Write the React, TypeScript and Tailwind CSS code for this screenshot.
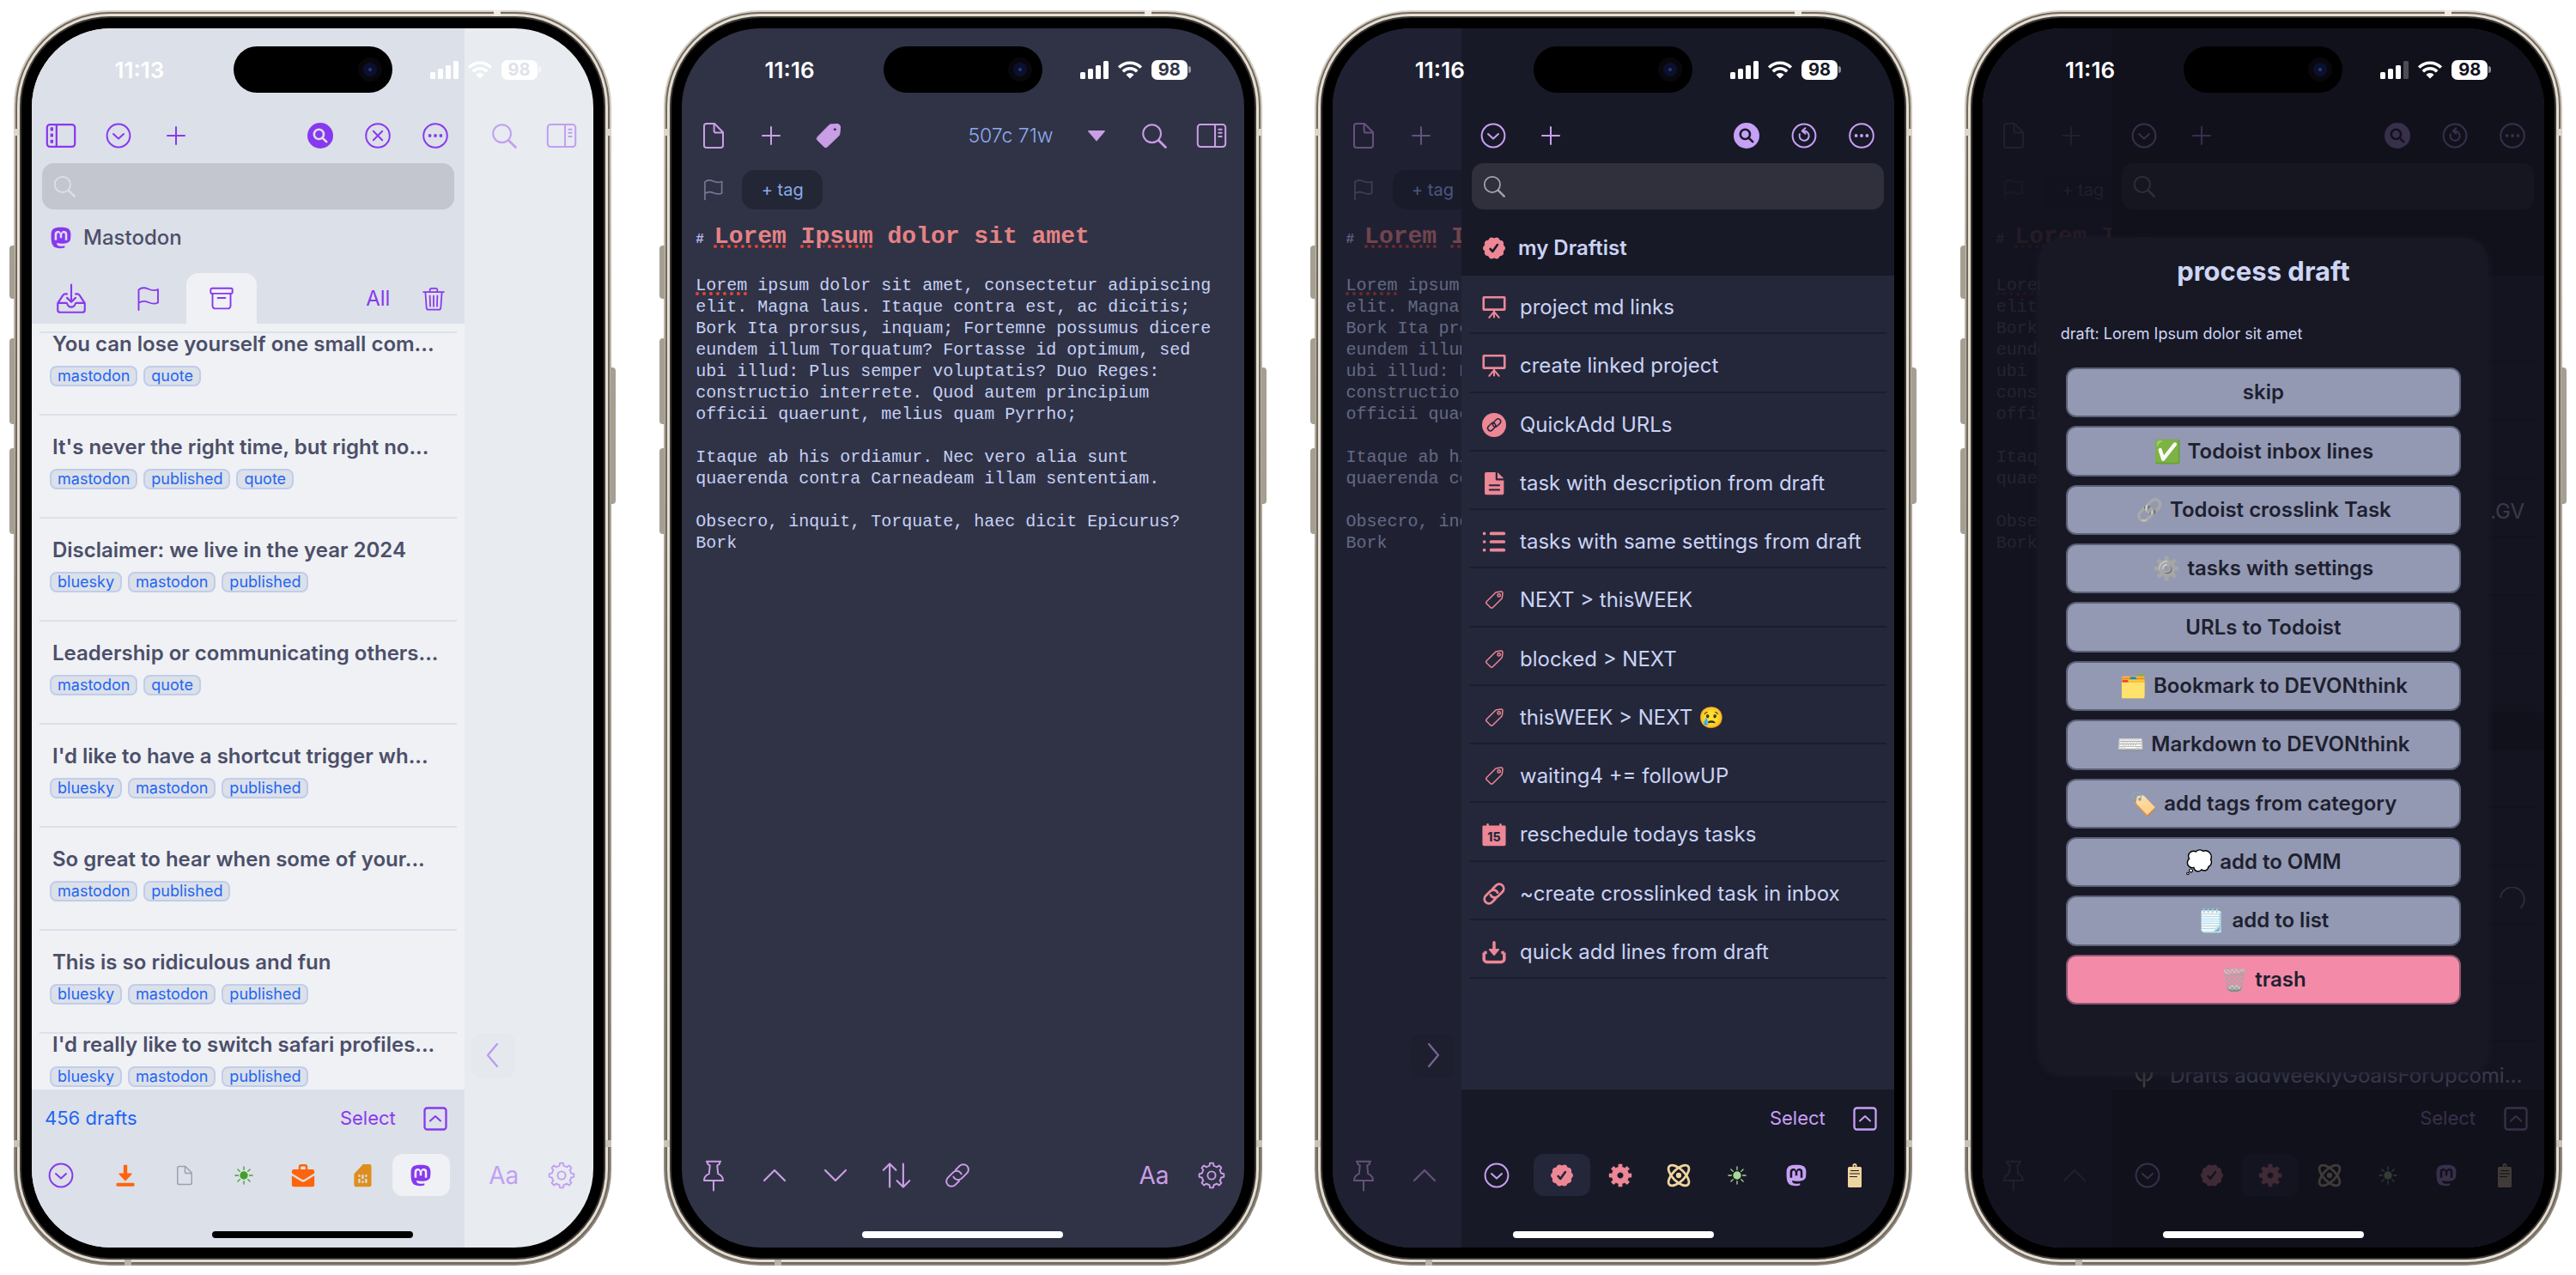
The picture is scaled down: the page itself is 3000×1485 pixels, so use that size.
import React from "react";
import { FaMastodon } from "react-icons/fa6";

type Kids = { children?: React.ReactNode };
type Cls = { className?: string };

/* ---------- icons ---------- */

function Svg({ children, className = "size-8", sw = 2 }: Kids & Cls & { sw?: number }) {
  return (
    <svg viewBox="0 0 32 32" className={className} fill="none" stroke="currentColor" strokeWidth={sw} strokeLinecap="round" strokeLinejoin="round" aria-hidden="true">
      {children}
    </svg>
  );
}

function gearPath(teeth: number, rOut: number, rIn: number, top: number, base: number) {
  const step = (Math.PI * 2) / teeth;
  const p = (r: number, a: number) => `${(16 + r * Math.sin(a)).toFixed(2)} ${(16 - r * Math.cos(a)).toFixed(2)}`;
  let d = "";
  for (let i = 0; i < teeth; i++) {
    const a = i * step;
    d += `${i ? "L" : "M"}${p(rIn, a - step * base)}L${p(rOut, a - step * top)}A${rOut} ${rOut} 0 0 1 ${p(rOut, a + step * top)}L${p(rIn, a + step * base)}A${rIn} ${rIn} 0 0 1 ${p(rIn, a + step * (1 - base))}`;
  }
  return d + "Z";
}

const SidebarLeft = () => (
  <Svg className="size-9">
    <rect x="1.6" y="4.5" width="28.8" height="23" rx="3" />
    <path d="M11.4 4.5v23" />
    <path d="M5 9.2h3M5 15.6h3M5 22h3" strokeWidth="3.6" strokeLinecap="butt" />
  </Svg>
);
const SidebarRight = () => (
  <Svg className="size-9" sw={1.8}>
    <rect x="1.6" y="4.5" width="28.8" height="23" rx="3" />
    <path d="M19.6 4.5v23M23.4 9.6h3M23.4 13.2h3M23.4 16.8h3" />
  </Svg>
);
const ChevronCircle = () => (
  <Svg>
    <circle cx="16" cy="16" r="13.4" />
    <path d="M10 14l6 5.6L22 14" />
  </Svg>
);
const Plus = () => (
  <Svg>
    <path d="M16 6v20M6 16h20" />
  </Svg>
);
const SearchFilled = ({ glass }: { glass: string }) => (
  <Svg>
    <circle cx="16" cy="16" r="15" fill="currentColor" stroke="none" />
    <g className={glass} strokeWidth="2.6">
      <circle cx="14.4" cy="14.4" r="5.6" />
      <path d="M18.8 18.8l4.4 4.4" />
    </g>
  </Svg>
);
const CloseCircle = () => (
  <Svg>
    <circle cx="16" cy="16" r="13.8" />
    <path d="M10.8 10.8l10.4 10.4M21.2 10.8L10.8 21.2" />
  </Svg>
);
const UndoCircle = () => (
  <Svg>
    <circle cx="16" cy="16" r="13.4" />
    <path d="M10.9 14.2a5.6 5.6 0 1 0 5.3-3.6M17.4 7.2l-3.6 3.4 3.8 3" />
  </Svg>
);
const DotsCircle = () => (
  <Svg>
    <circle cx="16" cy="16" r="13.8" />
    <path d="M9.6 16h.01M16 16h.01M22.4 16h.01" strokeWidth="3.8" />
  </Svg>
);
const Search = ({ className = "size-8" }: Cls) => (
  <Svg className={className}>
    <circle cx="13.6" cy="13.6" r="10.4" />
    <path d="M21.4 21.4l8 8" strokeWidth="2.8" />
  </Svg>
);
const Doc = ({ className = "size-8" }: Cls) => (
  <Svg className={className}>
    <path d="M7.5 2h9.6L27 12v15.2A2.8 2.8 0 0 1 24.2 30H7.8A2.8 2.8 0 0 1 5 27.2V4.8A2.8 2.8 0 0 1 7.8 2zM16.6 2.4v7.8A2.4 2.4 0 0 0 19 12.6h7.6" />
  </Svg>
);
const TagFilled = () => (
  <Svg>
    <path fillRule="evenodd" fill="currentColor" strokeWidth="1" d="M18.4 3l7.6-.6c1.9 0 3.6 1.7 3.6 3.6l-.7 7.8c-.1.9-.5 1.7-1.1 2.3L14.6 28.8c-1.2 1.2-2.8 1.2-4 0L3.2 21.4c-1.2-1.2-1.2-2.8 0-4L16.2 4.2c.6-.6 1.3-1.1 2.2-1.2zM23.4 6.7a1.9 1.9 0 1 0 .01 0z" />
  </Svg>
);
const TagOutline = () => (
  <Svg className="size-7" sw={1.7}>
    <path d="M19.5 5.300l6-.6c1.200-.1 2 .8 1.900 1.900l-.6 5.800c-.1.700-.4 1.300-.9 1.800L14.300 25.800c-.9.900-2.300.9-3.200 0l-4.900-4.900c-.9-.9-.9-2.300 0-3.200L17.700 6.200c.5-.5 1.100-.8 1.800-.9z" />
    <circle cx="22.500" cy="9.600" r="1.900" />
  </Svg>
);
const Flag = ({ className = "size-8" }: Cls) => (
  <Svg className={className} sw={1.9}>
    <path d="M4.500 29V5.500C8 2.500 12 3 15.500 4.500s7.500 2.500 11.500.5v15.500c-4 2-8 1-11.500-.5s-7.500-1.500-11 .8" />
  </Svg>
);
const Tray = () => (
  <Svg className="size-9" sw={1.9}>
    <path d="M16 1.500v17.500M11.600 15l4.400 4.400L20.400 15" />
    <path d="M11.500 11H9.800c-1.200 0-1.800.4-2.400 1.400L2 20.500v7a2.500 2.500 0 0 0 2.500 2.500h23a2.500 2.500 0 0 0 2.500-2.500v-7l-5.400-8.100c-.6-1-1.200-1.400-2.400-1.400h-1.700M2.500 20.300h8.300c.8 0 1 .5 1.200 1.300.5 1.800 2 3 4 3s3.500-1.200 4-3c.2-.8.4-1.300 1.200-1.300h8.300" />
  </Svg>
);
const Archive = () => (
  <Svg className="size-7" sw={2.2}>
    <rect x="1.500" y="2" width="29" height="7" rx="2" />
    <path d="M4 9.200v16.300A3.500 3.500 0 0 0 7.500 29h17a3.500 3.500 0 0 0 3.500-3.500V9.200M11 14.800h10" />
  </Svg>
);
const Trash = () => (
  <Svg className="size-7">
    <path d="M2.500 7h27M11 6.800V4.500A2.500 2.500 0 0 1 13.500 2h5A2.500 2.500 0 0 1 21 4.500v2.300M5 7.200l1.500 20.900A2.500 2.500 0 0 0 9 30.400h14a2.500 2.500 0 0 0 2.500-2.300L27 7.200M11 12l.5 14M16 12v14M21 12l-.5 14" />
  </Svg>
);
const SquareUp = () => (
  <Svg>
    <rect x="3.500" y="3.500" width="25" height="25" rx="3" strokeWidth="2.300" />
    <path d="M10 18.500l6-5.500 6 5.500" />
  </Svg>
);
const Download = () => (
  <Svg className="size-7">
    <path fill="currentColor" stroke="none" d="M14.300 2h3.400a.8.8 0 0 1 .8.8V13h5.300c.8 0 1.200 1 .6 1.600l-7.600 8.200a1.100 1.100 0 0 1-1.600 0l-7.600-8.200c-.6-.6-.2-1.600.6-1.600h5.300V2.800a.8.8 0 0 1 .8-.8zM5.500 26h21a1.500 1.500 0 0 1 1.500 1.500v1.500a1.500 1.500 0 0 1-1.500 1.500h-21A1.500 1.500 0 0 1 4 29v-1.500A1.500 1.500 0 0 1 5.500 26z" />
  </Svg>
);
const Sun = () => (
  <Svg className="size-7" sw={1.5}>
    <circle cx="16" cy="16" r="4.600" fill="currentColor" />
    <path d="M16 4.500v4M16 23.500v4M4.500 16h4M23.500 16h4M7.900 7.900l2.800 2.800M21.300 21.300l2.800 2.800M24.100 7.900l-2.800 2.800M10.700 21.300l-2.800 2.800" />
  </Svg>
);
const Briefcase = () => (
  <Svg className="size-7">
    <path fill="currentColor" stroke="none" fillRule="evenodd" d="M10 8V4.500A3.500 3.500 0 0 1 13.500 1h5A3.500 3.500 0 0 1 22 4.500V8h6.500A2.500 2.500 0 0 1 31 10.500V13l-13.500 8.400a3 3 0 0 1-3 0L1 13v-2.500A2.500 2.500 0 0 1 3.500 8zM12.800 8h6.400V4.900a1 1 0 0 0-1-1h-4.400a1 1 0 0 0-1 1zM1 16.200l12.600 7.800a4.600 4.600 0 0 0 4.800 0L31 16.200V28.500a2.500 2.500 0 0 1-2.500 2.500h-25A2.500 2.500 0 0 1 1 28.500z" />
  </Svg>
);
const SimCard = ({ dots }: { dots: string }) => (
  <Svg className="size-7">
    <path fill="currentColor" stroke="none" d="M17 1h8.500A2.500 2.500 0 0 1 28 3.500v25a2.500 2.500 0 0 1-2.500 2.500h-18A2.500 2.500 0 0 1 5 28.500V14z" />
    <path className={dots} strokeWidth="2.600" strokeLinecap="butt" d="M12 15v3M12 20.500v5.500M16.500 15v5.500M16.500 23v3M21 15v3M21 20.500v5.500" />
  </Svg>
);
const GearOutline = () => (
  <Svg sw={1.9}>
    <path d={gearPath(8, 14.4, 11.4, 0.17, 0.28)} />
    <circle cx="16" cy="16" r="4.600" />
  </Svg>
);
const GearFilled = () => (
  <Svg className="size-7">
    <path fillRule="evenodd" fill="currentColor" strokeWidth="1.500" d={gearPath(8, 14.4, 10.8, 0.18, 0.22) + "M16 11.200a4.800 4.800 0 1 0 .01 0Z"} />
  </Svg>
);
const Badge = ({ tick }: { tick: string }) => (
  <Svg className="size-7">
    <g fill="currentColor" stroke="none">
      <circle cx="16" cy="16" r="13.400" />
      {[0, 36, 72, 108, 144, 180, 216, 252, 288, 324].map((a) => (
        <circle key={a} cx="16" cy="4.600" r="3.400" transform={`rotate(${a + 18} 16 16)`} />
      ))}
    </g>
    <path className={tick} strokeWidth="3" d="M11 17l3 3.500 6.500-9" />
  </Svg>
);
const Easel = () => (
  <Svg className="size-7" sw={3}>
    <rect x="2" y="2.500" width="28" height="16.500" rx="0.500" />
    <path d="M16 20v9M15 23l-5.500 6.500M17 23l5.500 6.500" strokeWidth="2.400" />
  </Svg>
);
const LinkCircle = () => (
  <Svg className="size-7">
    <circle cx="16" cy="16" r="16" fill="currentColor" stroke="none" />
    <g className="stroke-[#24273a]" strokeWidth="1.700">
      <rect x="13" y="5.500" width="7" height="12" rx="3.500" transform="rotate(45 16 16)" />
      <rect x="12" y="14" width="7" height="12" rx="3.500" transform="rotate(45 16 16)" />
    </g>
  </Svg>
);
const DocFilled = () => (
  <Svg className="size-7">
    <path fill="currentColor" stroke="none" d="M5.500 1H18v9.500A1.500 1.500 0 0 0 19.500 12H29v17a2 2 0 0 1-2 2H5.500a2 2 0 0 1-2-2V3a2 2 0 0 1 2-2zM20.500 1L29 9.500h-8.500z" />
    <path className="stroke-[#24273a]" d="M10 18.500h13M10 24.500h13" strokeWidth="2.200" />
  </Svg>
);
const ListIcon = () => (
  <Svg className="size-7" sw={4.2}>
    <path d="M12 5h17M12 16h17M12 27h17M3 5h.01M3 16h.01M3 27h.01" />
  </Svg>
);
const Calendar = () => (
  <svg viewBox="0 0 32 32" className="size-7" fill="currentColor" aria-hidden="true">
    <path fillRule="evenodd" d="M2 4h4V2.500a1.500 1.500 0 0 1 3 0V4h14V2.500a1.500 1.500 0 0 1 3 0V4h4a1.500 1.500 0 0 1 1.500 1.500V29a2 2 0 0 1-2 2h-27a2 2 0 0 1-2-2V5.500A1.500 1.500 0 0 1 2 4z" />
    <text x="16" y="25" textAnchor="middle" className="fill-[#24273a] font-['Inter'] text-[16px] font-extrabold">15</text>
  </svg>
);
const Link = ({ sw = 2, className = "size-8" }: Cls & { sw?: number }) => (
  <Svg className={className} sw={sw}>
    <path d="M14 9.500l4.600-4.600a6 6 0 0 1 8.500 8.500l-6 6a6 6 0 0 1-8.500 0 6 6 0 0 1-1.200-1.800" />
    <path d="M18 22.500l-4.600 4.600a6 6 0 0 1-8.500-8.500l6-6a6 6 0 0 1 8.500 0 6 6 0 0 1 1.200 1.800" />
  </Svg>
);
const DownTray = () => (
  <Svg className="size-7" sw={4}>
    <path d="M2.500 16.500v8.500a4 4 0 0 0 4 4h19a4 4 0 0 0 4-4v-8.500M2.500 16.500h4M25.500 16.500h4" strokeLinecap="butt" />
    <path d="M16 3v12" />
    <path d="M10 12.500h12l-6 7z" fill="currentColor" strokeWidth="2" />
  </Svg>
);
const Atom = () => (
  <Svg className="size-7" sw={3.2}>
    <ellipse cx="16" cy="16" rx="17.500" ry="8" transform="rotate(45 16 16)" />
    <ellipse cx="16" cy="16" rx="17.500" ry="8" transform="rotate(-45 16 16)" />
    <circle cx="16" cy="16" r="2" fill="currentColor" />
  </Svg>
);
const Clipboard = () => (
  <Svg className="size-8">
    <path fill="currentColor" stroke="none" d="M9.500 6h4v-1.500a2.500 2.500 0 0 1 5 0V6h4A1.500 1.500 0 0 1 24 7.500v21a1.500 1.500 0 0 1-1.500 1.500h-13A1.500 1.500 0 0 1 8 28.500v-21A1.500 1.500 0 0 1 9.500 6z" />
    <path className="stroke-[#181926]" strokeWidth="1.200" d="M11.500 10.500h9M10.500 14h11M10.500 17.500h8" />
    <circle className="fill-[#181926]" cx="16" cy="5" r="0.900" stroke="none" />
  </Svg>
);
const Pin = () => (
  <Svg className="size-10" sw={1.6}>
    <path d="M9.500 3h13M10 3l.6 2.500 2 1.200-.8 7.800c-3 1.200-4.600 3.600-4.600 6.200h17.600c0-2.600-1.600-5-4.600-6.200l-.8-7.800 2-1.200L22 3M16 20.700V30" />
  </Svg>
);
const Chevron = ({ d }: { d: string }) => (
  <Svg>
    <path d={d} strokeWidth="2.200" />
  </Svg>
);
const UP = "M4 22l12-12 12 12";
const DOWN = "M4 10l12 12 12-12";
const LEFT = "M22 3L11 16l11 13";
const RIGHT = "M10 3l11 13-11 13";
const UpDown = () => (
  <Svg className="size-9" sw={1.9}>
    <path d="M9 28V4M2.500 10.500L9 4l6.500 6.500M23 4v24M16.500 21.500L23 28l6.500-6.500" />
  </Svg>
);
const Mastodon = () => <FaMastodon className="size-7" aria-hidden="true" />;

/* ---------- shared parts ---------- */

function IconButton({ label, children, className = "" }: Kids & Cls & { label: string }) {
  return (
    <button type="button" aria-label={label} className={`flex h-14 w-[67px] shrink-0 items-center justify-center ${className}`}>
      {children}
    </button>
  );
}

function StatusBar({ time, digits, weak }: { time: string; digits: string; weak?: boolean }) {
  return (
    <div className="absolute inset-x-0 top-[21px] z-30 grid h-[54px] grid-cols-[1fr_185px_1fr] items-center text-white">
      <span className="pl-4 text-center text-[26px] font-semibold">{time}</span>
      <div className="relative flex h-[54px] items-center justify-end rounded-full bg-black pr-3">
        <span className="flex size-7 items-center justify-center rounded-full bg-[#08080c]">
          <span className="flex size-4 items-center justify-center rounded-full bg-[#0c1030]">
            <span className="size-1 rounded-full bg-[#2f3c74]" />
          </span>
        </span>
      </div>
      <div className="flex items-center gap-[11px] pl-[44px]">
        <svg viewBox="0 0 33 21" className="h-[21px] w-[33px]" fill="currentColor" role="img" aria-label="Signal">
          <rect x="0" y="13" width="6" height="8" rx="1.500" />
          <rect x="9" y="9" width="6" height="12" rx="1.500" />
          <rect x="18" y="5" width="6" height="16" rx="1.500" />
          <rect x="27" y="0" width="6" height="21" rx="1.500" opacity={weak ? 0.25 : 1} />
        </svg>
        <svg viewBox="0 0 28 21" className="h-[21px] w-[28px]" fill="none" stroke="currentColor" strokeWidth="3.600" role="img" aria-label="Wi-Fi">
          <path d="M1.200 7.600a18 18 0 0 1 25.600 0M5.800 12.200a11.600 11.600 0 0 1 16.400 0" />
          <path d="M14 20.500l-4.600-4.600a6.500 6.500 0 0 1 9.200 0z" fill="currentColor" stroke="none" />
        </svg>
        <span className="flex items-center gap-px">
          <span className={`flex h-[23px] w-[42px] items-center justify-center rounded-[7px] bg-white text-[20px] font-bold ${digits}`}>98</span>
          <span className="h-2 w-[3px] rounded-r-full bg-white/50" />
        </span>
      </div>
    </div>
  );
}

function Phone({ children, bar, bg }: Kids & { bar: string; bg: string }) {
  return (
    <article className="relative rounded-[112px] bg-linear-to-b from-[#d8d0c4] via-[#a39b8e] to-[#8d867b] p-[2px]">
      <i className="absolute top-[274px] -left-[5px] h-[62px] w-[6px] rounded-l-sm bg-[#a59f92]" />
      <i className="absolute top-[382px] -left-[5px] h-[100px] w-[6px] rounded-l-sm bg-[#a59f92]" />
      <i className="absolute top-[510px] -left-[5px] h-[100px] w-[6px] rounded-l-sm bg-[#a59f92]" />
      <i className="absolute top-[416px] -right-[5px] h-[159px] w-[6px] rounded-r-sm bg-[#a59f92]" />
      <div className="relative rounded-[110px] bg-[#6e695f] p-[2px]">
        <div className="rounded-[108px] bg-[#e6ded2] p-[3px]">
          <div className="rounded-[105px] bg-[#3a3835] p-[2px]">
            <div className="rounded-[103px] bg-black p-3">
              <div className={`relative aspect-[654/1419] overflow-hidden rounded-[92px] ${bg}`}>
                {children}
                <div className={`absolute bottom-[11px] left-1/2 z-30 h-2 w-[234px] -translate-x-1/2 rounded-full ${bar}`} />
              </div>
            </div>
          </div>
        </div>
      </div>
      <i className="absolute top-0 right-[129px] h-[7px] w-2 bg-[#efeae2]" />
      <i className="absolute bottom-0 left-[129px] h-[7px] w-2 bg-[#b9b2a7]" />
      <i className="absolute top-[138px] left-0 h-2 w-[7px] bg-[#dcd6cb]" />
      <i className="absolute top-[138px] right-0 h-2 w-[7px] bg-[#dcd6cb]" />
      <i className="absolute bottom-[138px] left-0 h-2 w-[7px] bg-[#c9c3b7]" />
      <i className="absolute right-0 bottom-[138px] h-2 w-[7px] bg-[#c9c3b7]" />
    </article>
  );
}

function SearchField({ id, className, icon }: { id: string; className: string; icon: string }) {
  return (
    <label htmlFor={id} className={`mx-3 mt-1 flex h-[54px] items-center rounded-[14px] pl-3 ${className}`}>
      <span className={icon}>
        <Search className="size-7" />
      </span>
      <input id={id} type="search" aria-label="Search" className="ml-2 min-w-0 flex-1 bg-transparent text-[26px] outline-none" />
    </label>
  );
}

function SelectRow({ count }: { count?: string }) {
  return (
    <div className="flex h-[68px] items-center">
      <span className="flex-1 pl-[15px] text-[22px] text-[#1e66f5]">{count}</span>
      <button type="button" className="mr-[13px] text-[22px]">Select</button>
      <IconButton label="Expand">
        <SquareUp />
      </IconButton>
    </div>
  );
}

type Item = { label: string; color: string; icon: React.ReactNode };

function Workspaces({ items, active, activeBg, pad }: { items: Item[]; active: number; activeBg: string; pad: string }) {
  return (
    <nav className={`flex h-16 items-center ${pad}`}>
      <IconButton label="Workspaces">
        <ChevronCircle />
      </IconButton>
      <div className="ml-2 grid flex-1 grid-cols-6">
        {items.map((it, i) => (
          <button key={it.label} type="button" aria-label={it.label} className={`mx-px flex h-[49px] items-center justify-center rounded-xl ${it.color} ${i === active ? activeBg : ""}`}>
            {it.icon}
          </button>
        ))}
      </div>
    </nav>
  );
}

/* ---------- draft list (light) ---------- */

const drafts: [string, string[]][] = [
  ["You can lose yourself one small com...", ["mastodon", "quote"]],
  ["It's never the right time, but right no...", ["mastodon", "published", "quote"]],
  ["Disclaimer: we live in the year 2024", ["bluesky", "mastodon", "published"]],
  ["Leadership or communicating others...", ["mastodon", "quote"]],
  ["I'd like to have a shortcut trigger wh...", ["bluesky", "mastodon", "published"]],
  ["So great to hear when some of your...", ["mastodon", "published"]],
  ["This is so ridiculous and fun", ["bluesky", "mastodon", "published"]],
  ["I'd really like to switch safari profiles...", ["bluesky", "mastodon", "published"]],
];

const lightItems: Item[] = [
  { label: "Inbox", color: "text-[#fe640b]", icon: <Download /> },
  { label: "Drafts", color: "text-[#9ca0b0]", icon: <Doc className="size-6" /> },
  { label: "Today", color: "text-[#40a02b]", icon: <Sun /> },
  { label: "Work", color: "text-[#fe640b]", icon: <Briefcase /> },
  { label: "Cards", color: "text-[#df8e1d]", icon: <SimCard dots="stroke-[#dce0e8]" /> },
  { label: "Mastodon", color: "text-[#8839ef]", icon: <Mastodon /> },
];

function LightPhone() {
  return (
    <Phone bar="bg-black" bg="bg-[#e8ebf0]">
      <StatusBar time="11:13" digits="text-[#dfe2ea]" />
      <div className="flex h-full flex-col items-end justify-between pt-[97px] text-[#c0a0f2]">
        <div className="flex pr-1">
          <IconButton label="Find"><Search /></IconButton>
          <IconButton label="Show actions"><SidebarRight /></IconButton>
        </div>
        <div className="flex h-[112px] items-start pr-1">
          <button type="button" className="h-14 w-[67px] text-[28px]">Aa</button>
          <IconButton label="Settings"><GearOutline /></IconButton>
        </div>
      </div>
      <button type="button" aria-label="Close list" className="absolute right-[91px] bottom-[198px] flex h-[51px] w-[51px] items-center justify-center rounded-xl bg-[#e5e8ed] pr-1 text-[#bb98ef]">
        <Chevron d={LEFT} />
      </button>
      <section className="absolute inset-y-0 left-0 flex w-[77%] flex-col bg-[#dce0e8] pt-[97px] text-[#8839ef]">
        <div className="flex items-center">
          <IconButton label="Hide list"><SidebarLeft /></IconButton>
          <IconButton label="More"><ChevronCircle /></IconButton>
          <IconButton label="New draft"><Plus /></IconButton>
          <span className="flex-1" />
          <IconButton label="Search drafts"><SearchFilled glass="stroke-[#dce0e8]" /></IconButton>
          <IconButton label="Close"><CloseCircle /></IconButton>
          <IconButton label="Options"><DotsCircle /></IconButton>
        </div>
        <SearchField id="q-light" className="bg-[#c3c6cf]" icon="text-[#dde0e8]" />
        <h2 className="flex h-[74px] items-center gap-3 pb-2 pl-5 text-2xl font-medium text-[#4c4f69]">
          <FaMastodon className="size-7 text-[#8839ef]" aria-hidden="true" />
          Mastodon
        </h2>
        <div className="flex h-[59px] items-stretch">
          <button type="button" aria-label="Inbox" className="flex w-[92px] items-center justify-center"><Tray /></button>
          <button type="button" aria-label="Flagged" className="flex w-[88px] items-center justify-center"><Flag /></button>
          <button type="button" aria-label="Archive" className="flex w-[82px] items-center justify-center rounded-t-[14px] bg-[#eff1f5]"><Archive /></button>
          <span className="flex-1" />
          <button type="button" className="w-[67px] text-2xl">All</button>
          <button type="button" aria-label="Trash" className="flex w-[67px] items-center justify-center pr-1"><Trash /></button>
        </div>
        <ul className="min-h-0 flex-1 overflow-hidden bg-[#eff1f5] pt-[9px]">
          {drafts.map(([title, tags], i) => (
            <li key={title} className={`mx-[9px] border-t-2 border-[#dce0e8] pb-8 ${i === 0 || i === 7 ? "" : "pt-6"}`}>
              <h3 className="pl-[15px] text-2xl leading-[26px] font-semibold whitespace-nowrap text-[#4c4f69]">{title}</h3>
              <div className="mt-3 flex gap-[7px] pl-3">
                {tags.map((t) => (
                  <span key={t} className="h-6 rounded-lg border-2 border-[#c0cdea] bg-[#dce0e8] px-[7px] text-lg leading-[19px] text-[#1e66f5]">{t}</span>
                ))}
              </div>
            </li>
          ))}
        </ul>
        <footer className="h-[184px]">
          <SelectRow count="456 drafts" />
          <Workspaces items={lightItems} active={5} activeBg="bg-[#eff1f5]" pad="pr-4" />
        </footer>
      </section>
    </Phone>
  );
}

/* ---------- editor (dark) ---------- */

const miss = "underline decoration-[#e64533] decoration-dotted decoration-4";

function Editor() {
  return (
    <section className="flex h-full flex-col bg-[#303346] pt-[97px] text-[#ca9ee6]">
      <div className="flex items-center pr-1 pl-[3px]">
        <IconButton label="Draft"><Doc /></IconButton>
        <IconButton label="New draft"><Plus /></IconButton>
        <IconButton label="Tags"><TagFilled /></IconButton>
        <span className="mr-[17px] flex-1 text-right text-[23px] font-light text-[#8caaee]">507c 71w</span>
        <IconButton label="Counts">
          <Svg className="size-7"><path d="M5.500 10h21L16 22.500z" fill="currentColor" strokeWidth="1.500" /></Svg>
        </IconButton>
        <IconButton label="Find"><Search /></IconButton>
        <IconButton label="Show actions"><SidebarRight /></IconButton>
      </div>
      <div className="mt-[7px] flex items-center pl-[3px]">
        <IconButton label="Flag" className="text-[#737994]"><Flag className="size-7" /></IconButton>
        <button type="button" className="h-[46px] w-[94px] rounded-[15px] bg-[#232634] text-xl text-[#8caaee]">+ tag</button>
      </div>
      <div className="flex-1 px-4 pt-[9px] font-['Liberation_Mono'] text-xl leading-[25px] whitespace-nowrap text-[#c6d0f5]">
        <h2 className="text-[28px] leading-9 font-bold text-[#e78284]">
          <span className="mr-3 text-base text-[#babbf1]">#</span>
          <span className={miss}>Lorem</span> <span className={miss}>Ipsum</span> dolor sit amet
        </h2>
        <p className="mt-[26px]"><span className={miss}>Lorem</span> ipsum dolor sit amet, consectetur adipiscing<br />elit. Magna laus. Itaque contra est, ac dicitis;<br />Bork Ita prorsus, inquam; Fortemne possumus dicere<br />eundem illum Torquatum? Fortasse id optimum, sed<br />ubi illud: Plus semper voluptatis? Duo Reges:<br />constructio interrete. Quod autem principium<br />officii quaerunt, melius quam Pyrrho;</p>
        <p className="mt-[25px]">Itaque ab his ordiamur. Nec vero alia sunt<br />quaerenda contra Carneadeam illam sententiam.</p>
        <p className="mt-[25px]">Obsecro, inquit, Torquate, haec dicit Epicurus?<br />Bork</p>
      </div>
      <footer className="flex h-[112px] items-start pr-1 pl-[3px]">
        <div className="flex gap-1">
          <IconButton label="Pin"><Pin /></IconButton>
          <IconButton label="Previous"><Chevron d={UP} /></IconButton>
          <IconButton label="Next"><Chevron d={DOWN} /></IconButton>
          <IconButton label="Arrange"><UpDown /></IconButton>
          <IconButton label="Link"><Link /></IconButton>
        </div>
        <span className="flex-1" />
        <button type="button" className="h-14 w-[67px] text-[28px]">Aa</button>
        <IconButton label="Settings"><GearOutline /></IconButton>
      </footer>
    </section>
  );
}

function EditorPeek() {
  return (
    <div className="absolute inset-y-0 left-0 w-[23%] overflow-hidden">
      <div className="h-full w-[435%]">
        <Editor />
      </div>
      <div className="absolute inset-0 bg-[#131323]/55" />
    </div>
  );
}

/* ---------- action drawer (dark) ---------- */

const actions: [React.ReactNode, string][] = [
  [<Easel />, "project md links"],
  [<Easel />, "create linked project"],
  [<LinkCircle />, "QuickAdd URLs"],
  [<DocFilled />, "task with description from draft"],
  [<ListIcon />, "tasks with same settings from draft"],
  [<TagOutline />, "NEXT > thisWEEK"],
  [<TagOutline />, "blocked > NEXT"],
  [<TagOutline />, "thisWEEK > NEXT 😢"],
  [<TagOutline />, "waiting4 += followUP"],
  [<Calendar />, "reschedule todays tasks"],
  [<Link className="size-7" sw={3.2} />, "~create crosslinked task in inbox"],
  [<DownTray />, "quick add lines from draft"],
];

const darkItems: Item[] = [
  { label: "Draftist", color: "text-[#ed8796]", icon: <Badge tick="stroke-[#24273a]" /> },
  { label: "Processing", color: "text-[#ed8796]", icon: <GearFilled /> },
  { label: "Science", color: "text-[#eed49f]", icon: <Atom /> },
  { label: "Today", color: "text-[#a6da95]", icon: <Sun /> },
  { label: "Mastodon", color: "text-[#c6a0f6]", icon: <Mastodon /> },
  { label: "Clipboard", color: "text-[#eed49f]", icon: <Clipboard /> },
];

function Drawer({ children, id, active, title }: Kids & { id: string; active: number; title?: string }) {
  return (
    <section className="absolute inset-y-0 right-0 flex w-[77%] flex-col bg-[#181926] pt-[97px] text-[#c6a0f6]">
      <div className="flex items-center px-1">
        <IconButton label="More"><ChevronCircle /></IconButton>
        <IconButton label="New action"><Plus /></IconButton>
        <span className="flex-1" />
        <IconButton label="Search actions"><SearchFilled glass="stroke-[#181926]" /></IconButton>
        <IconButton label="History"><UndoCircle /></IconButton>
        <IconButton label="Options"><DotsCircle /></IconButton>
      </div>
      <SearchField id={id} className="bg-[#302f3c]" icon="text-[#a0a2b0]" />
      <h2 className="flex h-[77px] items-center gap-[14px] pt-3 pl-6 text-2xl font-semibold text-[#cad3f5]">
        <span className="text-[#ed8796]"><Badge tick="stroke-[#181926]" /></span>
        {title}
      </h2>
      <div className="min-h-0 flex-1 overflow-hidden bg-[#24273a]">{children}</div>
      <footer className="h-[184px]">
        <SelectRow />
        <Workspaces items={darkItems} active={active} activeBg="bg-[#24273a]" pad="pr-3 pl-2" />
      </footer>
    </section>
  );
}

function ActionsPhone() {
  return (
    <Phone bar="bg-white" bg="bg-[#202233]">
      <StatusBar time="11:16" digits="text-[#181926]" />
      <EditorPeek />
      <button type="button" aria-label="Close actions" className="absolute bottom-[198px] left-[91px] flex h-[51px] w-[51px] items-center justify-center rounded-xl bg-[#1e1f2e] pl-1 text-[#7a6496]">
        <Chevron d={RIGHT} />
      </button>
      <Drawer id="q-actions" active={0} title="my Draftist">
        <ul className="grid h-[819px] grid-rows-12">
          {actions.map(([icon, label]) => (
            <li key={label} className="mx-[9px] border-b-2 border-[#1b1d2b]">
              <button type="button" className="flex h-full w-full items-center gap-4 pt-2 pl-[15px] text-left text-2xl whitespace-nowrap text-[#cad3f5]">
                <span className="text-[#ed8796]">{icon}</span>
                {label}
              </button>
            </li>
          ))}
        </ul>
      </Drawer>
    </Phone>
  );
}

/* ---------- prompt ---------- */

const choices: { emoji?: string; label: string; tone?: string }[] = [
  { label: "skip" },
  { emoji: "✅", label: "Todoist inbox lines" },
  { emoji: "🔗", label: "Todoist crosslink Task", tone: "grayscale" },
  { emoji: "⚙️", label: "tasks with settings", tone: "grayscale" },
  { label: "URLs to Todoist" },
  { emoji: "🗂️", label: "Bookmark to DEVONthink" },
  { emoji: "⌨️", label: "Markdown to DEVONthink", tone: "grayscale" },
  { emoji: "🏷️", label: "add tags from category" },
  { emoji: "💭", label: "add to OMM" },
  { emoji: "🗒️", label: "add to list" },
  { emoji: "🗑️", label: "trash", tone: "grayscale" },
];

const rows = ["", "", "", ".GV", "", "", "", "-", "", "", "", "", ""];

function PromptPhone() {
  return (
    <Phone bar="bg-white" bg="bg-[#202233]">
      <StatusBar time="11:16" digits="text-[#11111b]" weak />
      <EditorPeek />
      <Drawer id="q-prompt" active={1}>
        <ul className="pt-[33px] text-2xl text-[#cad3f5]">
          {rows.map((r, i) =>
            r === "-" ? (
              <li key={i} className="h-[43px] bg-[#181926]" />
            ) : (
              <li key={i} className="mx-[9px] flex h-[68px] items-center justify-end border-b-2 border-[#1b1d2b] pt-2.5 pr-[14px]">{r}</li>
            ),
          )}
          <li className="flex h-[68px] items-center gap-4 pt-3 pl-6 whitespace-nowrap">
            <span className="text-[#eed49f]"><Svg className="size-7" sw={3}><path d="M16 2v28M7 4c-3 8-1 16 5 18M25 4c3 8 1 16-5 18" /></Svg></span>
            Drafts addWeeklyGoalsForUpcomi...
          </li>
        </ul>
      </Drawer>
      <div className="absolute inset-0 bg-[#0f101a]/78" />
      <Svg className="absolute right-[22px] bottom-[388px] size-8 text-[#2b2b3c]"><path d="M3 12a14 14 0 1 1 24 12" /></Svg>
      <div role="dialog" aria-labelledby="prompt-title" className="absolute inset-x-[66px] top-[244px] flex h-[972px] flex-col rounded-[28px] bg-[#181825] px-[31px] shadow-[0_2px_8px_1px_rgba(32,32,48,0.7)]">
        <h2 id="prompt-title" className="pt-4 text-center text-[31px] leading-[46px] font-bold text-[#cdd6f4]">process draft</h2>
        <p className="-ml-1.5 pt-[38px] text-lg leading-6 text-[#cdd6f4]">draft: Lorem Ipsum dolor sit amet</p>
        <div className="mt-[27px] grid h-[742px] auto-rows-fr gap-2.5">
          {choices.map(({ emoji, label, tone = "" }) => (
            <button key={label} type="button" className={`flex items-center justify-center gap-2 rounded-xl border-2 text-2xl font-semibold whitespace-nowrap text-[#1e2030] ${label === "trash" ? "border-[#8c566e] bg-[#f38ba8]" : "border-[#5c6079] bg-[#9399b2]"}`}>
              {emoji && <span className={`text-[26px] leading-8 ${tone}`}>{emoji}</span>}
              {label}
            </button>
          ))}
        </div>
      </div>
    </Phone>
  );
}

export default function App() {
  return (
    <main className="grid grid-cols-4 gap-[61px] bg-white px-4 pt-3 pb-3 font-['Inter',sans-serif]">
      <LightPhone />
      <Phone bar="bg-white" bg="bg-[#303346]">
        <StatusBar time="11:16" digits="text-[#303346]" />
        <Editor />
      </Phone>
      <ActionsPhone />
      <PromptPhone />
    </main>
  );
}
